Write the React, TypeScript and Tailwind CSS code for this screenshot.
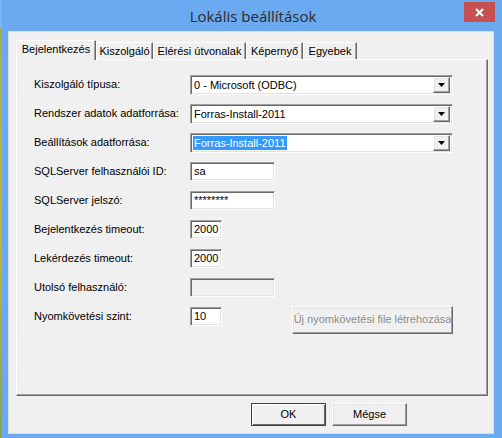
import type { ReactNode } from "react";

const sunken =
  "border border-t-[#a0a0a0] border-l-[#a0a0a0] border-r-white border-b-white shadow-[inset_1px_1px_0_#696969,inset_-1px_-1px_0_#e3e3e3]";
const raised =
  "border border-t-white border-l-white border-r-[#696969] border-b-[#696969] shadow-[inset_-1px_-1px_0_#a0a0a0,inset_1px_1px_0_#e3e3e3]";

function Row({ label, children }: { label: string; children: ReactNode }) {
  return (
    <div className="flex h-[29px] items-center">
      <div className="w-[156px] shrink-0 text-[11px] text-black">{label}</div>
      {children}
    </div>
  );
}

function Combo({ value, selected }: { value: string; selected?: boolean }) {
  return (
    <div className={`flex h-[20px] w-[263px] items-center bg-white pl-[2px] pr-[2px] ${sunken}`}>
      <div className="flex min-w-0 flex-1 items-center">
        <span
          className={
            "px-[1px] text-[11px] leading-[14px] " +
            (selected ? "bg-[#3399ff] text-white" : "text-black")
          }
        >
          {value}
        </span>
      </div>
      <div className={`flex h-[16px] w-[17px] items-center justify-center bg-[#f0f0f0] ${raised}`}>
        <svg width="7" height="4" viewBox="0 0 7 4">
          <path d="M0 0h7L3.5 4z" fill="#000" />
        </svg>
      </div>
    </div>
  );
}

function Field({ w, value, disabled }: { w: string; value?: string; disabled?: boolean }) {
  return (
    <div
      className={`flex h-[19px] items-center px-[3px] text-[11px] text-black ${w} ${sunken} ${
        disabled ? "bg-[#f0f0f0]" : "bg-white"
      }`}
    >
      {value}
    </div>
  );
}

function Tab({ label, w, active }: { label: string; w: string; active?: boolean }) {
  return (
    <div
      className={
        `flex items-center justify-center bg-[#f0f0f0] text-[11px] text-black ${w} ` +
        "border-l border-t border-r border-l-white border-t-white border-r-[#696969] shadow-[inset_-1px_0_0_#a0a0a0] " +
        (active ? "relative z-10 -mb-px h-[20px] pb-[2px]" : "h-[17px]")
      }
    >
      {label}
    </div>
  );
}

export default function App() {
  return (
    <div
      className="flex h-[438px] w-[502px]"
      style={{ fontFamily: '"Liberation Sans", Arial, sans-serif' }}
    >
      {/* bit of desktop showing at the left edge */}
      <div className="flex w-[2px] flex-col">
        <div className="h-[28px] bg-[#7ab4f2]" />
        <div className="flex-1 bg-gradient-to-b from-[#a4b04a] via-[#c2b43a] to-[#8aa548]" />
      </div>

      <div className="flex flex-1 flex-col bg-[#6ba9f0]">
        {/* title bar */}
        <div className="relative h-[31px] shrink-0">
          <div
            className="pl-[2px] pt-[5px] text-center text-[15px] text-[#2b2b2b]"
            style={{ fontFamily: '"Open Sans", "Noto Sans", sans-serif' }}
          >
            Lokális beállítások
          </div>
          <div className="absolute right-[7px] top-[2px] flex h-[20px] w-[31px] items-center justify-center bg-[#c75050]">
            <svg width="9" height="9" viewBox="0 0 9 9">
              <path d="M1 1l7 7M8 1L1 8" stroke="#fff" strokeWidth="2" />
            </svg>
          </div>
        </div>

        {/* client area */}
        <div className="mb-[4px] ml-[6px] mr-[8px] flex flex-1 flex-col border border-[#dcdcdc] bg-[#f0f0f0] pl-[7px] pr-[5px] pt-[8px]">
          <div className="flex h-[19px] items-end">
            <Tab label="Bejelentkezés" w="w-[80px]" active />
            <Tab label="Kiszolgáló" w="w-[57px]" />
            <Tab label="Elérési útvonalak" w="w-[93px]" />
            <Tab label="Képernyő" w="w-[57px]" />
            <Tab label="Egyebek" w="w-[54px]" />
          </div>

          <div className="h-[337px] border border-l-white border-t-white border-r-[#696969] border-b-[#696969] pl-[17px] pt-[10px] shadow-[inset_-1px_-1px_0_#a0a0a0]">
            <Row label="Kiszolgáló típusa:">
              <Combo value="0 - Microsoft (ODBC)" />
            </Row>
            <Row label="Rendszer adatok adatforrása:">
              <Combo value="Forras-Install-2011" />
            </Row>
            <Row label="Beállítások adatforrása:">
              <Combo value="Forras-Install-2011" selected />
            </Row>
            <Row label="SQLServer felhasználói ID:">
              <Field w="w-[85px]" value="sa" />
            </Row>
            <Row label="SQLServer jelszó:">
              <Field w="w-[85px]" value="********" />
            </Row>
            <Row label="Bejelentkezés timeout:">
              <Field w="w-[32px]" value="2000" />
            </Row>
            <Row label="Lekérdezés timeout:">
              <Field w="w-[32px]" value="2000" />
            </Row>
            <Row label="Utolsó felhasználó:">
              <Field w="w-[85px]" disabled />
            </Row>
            <Row label="Nyomkövetési szint:">
              <Field w="w-[32px]" value="10" />
              <div
                className={`ml-[70px] mt-[6px] flex h-[28px] w-[161px] items-center justify-center bg-[#f0f0f0] text-[11px] text-[#8d8d8d] ${raised}`}
              >
                Új nyomkövetési file létrehozása
              </div>
            </Row>
          </div>

          <div className="flex gap-[6px] pl-[235px] pt-[7px]">
            <div className="flex h-[23px] w-[75px] items-center justify-center border border-[#404040] bg-[#f0f0f0] text-[11px] text-black shadow-[inset_1px_1px_0_#fff,inset_-1px_-1px_0_#696969]">
              OK
            </div>
            <div className={`flex h-[23px] w-[75px] items-center justify-center bg-[#f0f0f0] text-[11px] text-black ${raised}`}>
              Mégse
            </div>
          </div>
        </div>
      </div>
    </div>
  );
}
